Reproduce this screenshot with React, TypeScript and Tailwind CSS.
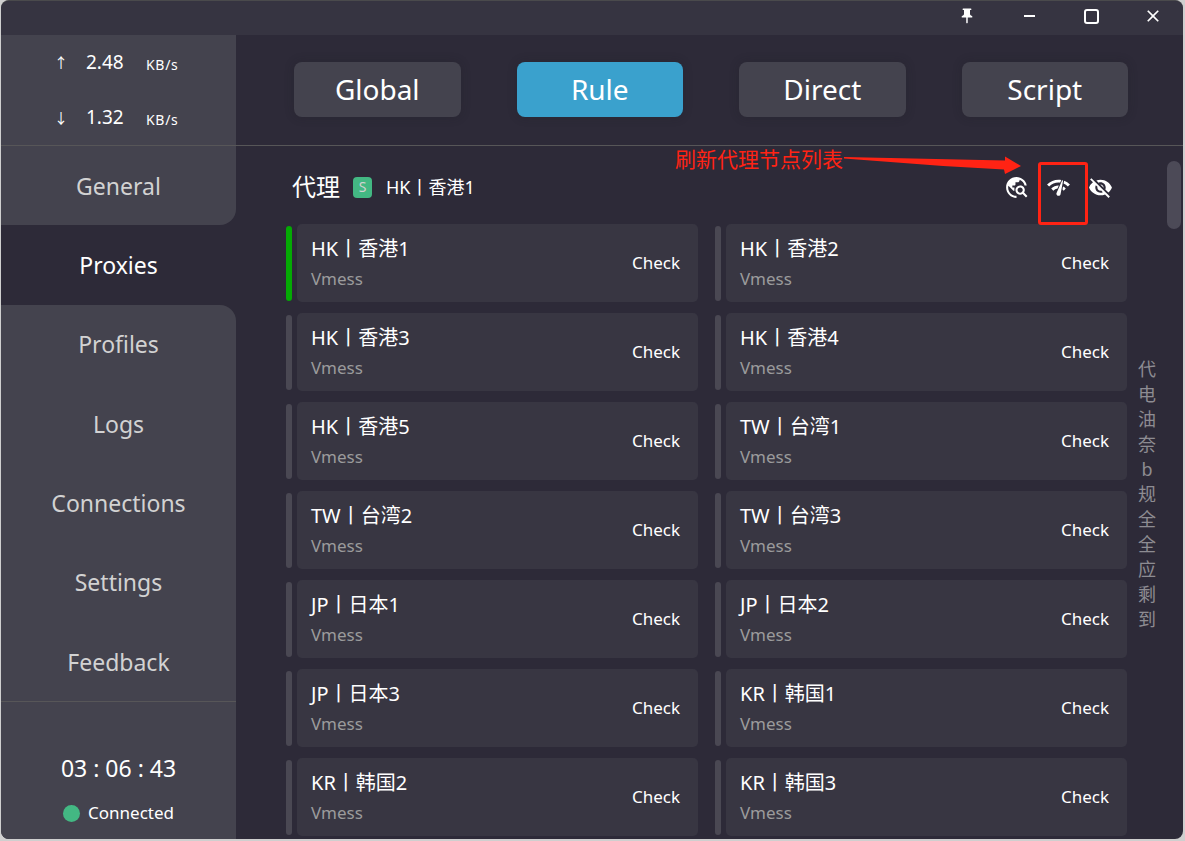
import React from 'react';
import {
  MdClose,
  MdNetworkCheck,
  MdPushPin,
  MdTravelExplore,
  MdVisibilityOff,
} from 'react-icons/md';

const modes = ['Global', 'Rule', 'Direct', 'Script'];

const pages = ['General', 'Proxies', 'Profiles', 'Logs', 'Connections', 'Settings', 'Feedback'];

const nodes = [
  'HK丨香港1',
  'HK丨香港2',
  'HK丨香港3',
  'HK丨香港4',
  'HK丨香港5',
  'TW丨台湾1',
  'TW丨台湾2',
  'TW丨台湾3',
  'JP丨日本1',
  'JP丨日本2',
  'JP丨日本3',
  'KR丨韩国1',
  'KR丨韩国2',
  'KR丨韩国3',
];

const groupIndex = ['代', '电', '油', '奈', 'b', '规', '全', '全', '应', '剩', '到'];

function TitleBar() {
  return (
    <header className="flex h-[34px] shrink-0 items-center justify-end gap-[38px] bg-[#363441] pr-[18px] pb-1 text-white">
      <button aria-label="Pin window" className="flex size-6 items-center justify-center">
        <MdPushPin size={18} />
      </button>
      <button aria-label="Minimize" className="flex size-6 items-center justify-center">
        <span className="h-[2px] w-[11px] bg-white" />
      </button>
      <button aria-label="Maximize" className="flex size-6 items-center justify-center">
        <span className="size-[15px] rounded-[3px] border-2 border-white" />
      </button>
      <button aria-label="Close" className="flex size-6 items-center justify-center">
        <MdClose size={20} />
      </button>
    </header>
  );
}

function Speed({ arrow, value }: { arrow: string; value: string }) {
  return (
    <div className="flex h-[55px] items-center text-white">
      <span className="w-8 text-sm">{arrow}</span>
      <span className="w-[60px] text-[19px]">{value}</span>
      <span className="pt-1 text-sm tracking-wider">KB/s</span>
    </div>
  );
}

function Sidebar() {
  const active = pages.indexOf('Proxies');
  return (
    <aside className="flex w-[235px] shrink-0 flex-col">
      <div className="h-[111px] border-b border-[#575658] bg-[#44434e] pl-[53px]">
        <Speed arrow="↑" value="2.48" />
        <Speed arrow="↓" value="1.32" />
      </div>
      <nav className="flex h-[555px] flex-col">
        {pages.map((page, i) => {
          let look = 'bg-[#44434e] text-[#d2d2d2]';
          if (i === active) look = 'text-white';
          if (i === active - 1) look += ' rounded-br-2xl';
          if (i === active + 1) look += ' rounded-tr-2xl';
          return (
            <a
              key={page}
              href={`#${page.toLowerCase()}`}
              className={`flex flex-1 items-center justify-center pt-px text-[23px] ${look}`}
            >
              {page}
            </a>
          );
        })}
      </nav>
      <div className="flex flex-1 flex-col items-center border-t border-[#575658] bg-[#44434e] pt-12 text-white">
        <div className="text-[23px] leading-9">03 : 06 : 43</div>
        <div className="mt-[13px] flex items-center gap-2 text-[17px] leading-7">
          <span className="size-[17px] rounded-full bg-[#43b883]" />
          Connected
        </div>
      </div>
    </aside>
  );
}

function ModeBar() {
  return (
    <div className="flex h-[111px] shrink-0 items-center gap-14 border-b border-[#575658] pr-[55px] pb-0.5 pl-[58px]">
      {modes.map((mode) => (
        <button
          key={mode}
          className={`h-[55px] flex-1 rounded-lg text-[28px] text-white shadow-[0_0_10px_rgba(30,30,35,0.3)] ${
            mode === 'Rule' ? 'bg-[#3aa1cd]' : 'bg-[#44434e]'
          }`}
        >
          {mode}
        </button>
      ))}
    </div>
  );
}

function GroupHeader() {
  return (
    <div className="flex h-[78px] items-center pt-1 pr-[14px] pl-1.5 text-white">
      <h2 className="text-2xl">代理</h2>
      <span className="ml-[13px] flex h-[21px] w-[19px] items-center justify-center rounded bg-[#43b883] text-sm text-[#d2d2d2]">
        S
      </span>
      <span className="ml-[14px] text-lg">HK丨香港1</span>
      <div className="ml-auto flex gap-[17px]">
        <button aria-label="Locate selected proxy">
          <MdTravelExplore size={25} />
        </button>
        <div className="relative flex">
          <button aria-label="Check latency of all proxies">
            <MdNetworkCheck size={25} />
          </button>
          <div className="absolute -top-[13px] -left-2 h-[63px] w-[50px] rounded-[3px] border-3 border-[#ff2314]" />
          <div className="absolute -top-[34px] right-[50px] flex items-start">
            <span className="text-[21px] leading-9 whitespace-nowrap text-[#ff2314]">
              刷新代理节点列表
            </span>
            <svg width="178" height="36" viewBox="0 0 178 36" fill="#ff2314" aria-hidden="true">
              <path d="M1 16 L162 19.5 L162 15.5 L178 25 L162 33 L161 28.5 L100 25 L1 17.5 Z" />
            </svg>
          </div>
        </div>
        <button aria-label="Hide unavailable proxies">
          <MdVisibilityOff size={25} />
        </button>
      </div>
    </div>
  );
}

function NodeCard({ name, selected }: { name: string; selected: boolean }) {
  return (
    <li className="flex h-[78px] items-center gap-[5px]">
      <span className={`h-[75px] w-1.5 rounded-[3px] ${selected ? 'bg-[#04aa04]' : 'bg-[#4a4853]'}`} />
      <div className="flex h-full flex-1 items-center justify-between rounded-[5px] bg-[#383642] pr-[18px] pl-[14px]">
        <div className="pt-0.5">
          <div className="text-[20px] leading-[30px] text-white">{name}</div>
          <div className="text-[17px] leading-[30px] text-[#9b9b9c]">Vmess</div>
        </div>
        <button className="text-[17px] text-white">Check</button>
      </div>
    </li>
  );
}

export default function App() {
  return (
    <div className="h-screen bg-[#cfcfcf] pr-[2px] pb-[2px] pl-px font-['Noto_Sans','Noto_Sans_CJK_SC',sans-serif]">
      <div className="flex h-full flex-col overflow-hidden rounded-lg border-t border-[#4a4a4c] bg-[#2d2a38]">
        <TitleBar />
        <div className="flex min-h-0 flex-1">
          <Sidebar />
          <main className="flex min-w-0 flex-1 flex-col">
            <ModeBar />
            <div className="relative flex min-h-0 flex-1 overflow-hidden pl-[50px]">
              <section className="min-w-0 flex-1">
                <GroupHeader />
                <ul className="grid grid-cols-2 gap-x-[17px] gap-y-[11px]">
                  {nodes.map((name, i) => (
                    <NodeCard key={name} name={name} selected={i === 0} />
                  ))}
                </ul>
              </section>
              <div className="flex w-14 flex-col items-center justify-center pt-1 pr-4 text-lg leading-[25px] text-[#8d8c92]">
                {groupIndex.map((label, i) => (
                  <span key={i}>{label}</span>
                ))}
              </div>
              <div className="absolute top-[15px] right-[2px] h-[68px] w-[14px] rounded-full bg-[#4c4a57]" />
            </div>
          </main>
        </div>
      </div>
    </div>
  );
}
